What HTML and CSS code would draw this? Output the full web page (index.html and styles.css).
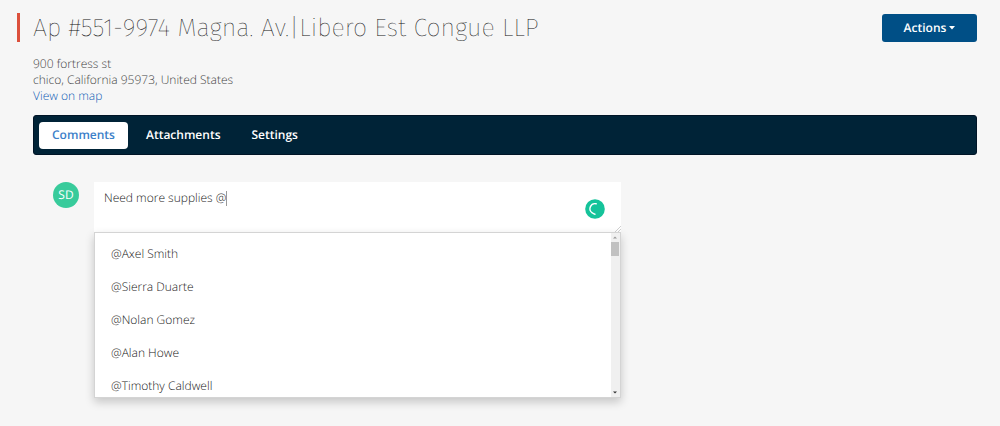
FILE: index.html
```html
<!DOCTYPE html>
<html lang="en">
<head>
<meta charset="utf-8">
<meta name="viewport" content="width=device-width, initial-scale=1">
<title>Libero Est Congue LLP</title>
<link rel="stylesheet" href="styles.css">
</head>
<body>
<header class="header">
  <h1 class="title">Ap #551-9974 Magna. Av.|Libero Est Congue LLP</h1>
  <button class="actions" type="button">Actions
    <svg class="caret" viewBox="0 0 6 4" aria-hidden="true"><path d="M0 0h6L3 3.5z"/></svg>
  </button>
</header>
<main class="content">
  <address class="address">
    <span>900 fortress st</span>
    <span>chico, California 95973, United States</span>
    <a class="map-link" href="#map">View on map</a>
  </address>
  <nav class="tabs">
    <a class="tab tab-active" href="#comments">Comments</a>
    <a class="tab" href="#attachments">Attachments</a>
    <a class="tab" href="#settings">Settings</a>
  </nav>
  <section class="composer">
    <span class="avatar">SD</span>
    <div class="editor">
      <textarea class="comment" aria-label="Comment">Need more supplies @</textarea>
      <span class="text-cursor"></span>
      <svg class="spinner" viewBox="0 0 20 20" aria-hidden="true">
        <circle cx="10" cy="10" r="9.8" fill="#15c39a"/>
        <path d="M11.2 4.8A5 5 0 0 0 7.2 13.8Q8.4 15 10 15.2" fill="none" stroke="#fff" stroke-width="1.4" stroke-linecap="round"/>
      </svg>
      <svg class="grip" viewBox="0 0 6 6" aria-hidden="true"><path d="M0 6L6 0M3 6L6 3" stroke="#bbb" stroke-width=".7"/></svg>
      <div class="mentions">
        <ul class="people" role="listbox" aria-label="People">
          <li class="person" role="option">@Axel Smith</li>
          <li class="person" role="option">@Sierra Duarte</li>
          <li class="person" role="option">@Nolan Gomez</li>
          <li class="person" role="option">@Alan Howe</li>
          <li class="person" role="option">@Timothy Caldwell</li>
        </ul>
        <div class="scrollbar" aria-hidden="true">
          <svg class="arrow" viewBox="0 0 8 8"><path d="M2 5h4L4 3z" fill="#999"/></svg>
          <span class="thumb"></span>
          <svg class="arrow arrow-down" viewBox="0 0 8 8"><path d="M2 3h4L4 5z" fill="#333"/></svg>
        </div>
      </div>
    </div>
  </section>
</main>
</body>
</html>
```
FILE: styles.css
```css
* { box-sizing: border-box; }
body {
  display: flow-root;
  min-height: 100vh;
  margin: 0;
  background: #f6f6f6;
  color: #222;
  font: 300 12px/16px "Open Sans", "Liberation Sans", sans-serif;
  text-rendering: geometricPrecision;
}
.header {
  display: flex;
  justify-content: space-between;
  align-items: center;
  margin: 13px 23px 0 17px;
}
.title {
  margin: 0;
  padding: 1px 0 0 13px;
  border-left: 3px solid #dc503c;
  color: #111;
  font: 200 25px/28px "Fira Sans", Roboto, sans-serif;
}
.actions {
  display: flex;
  align-items: center;
  justify-content: center;
  gap: 3px;
  width: 95px;
  height: 28px;
  padding: 0;
  border: 0;
  border-radius: 3px;
  background: #004f86;
  color: #fff;
  font: 600 12px/16px "Open Sans", sans-serif;
  text-rendering: inherit;
}
.caret { width: 6px; height: 4px; fill: #fff; }
.content { margin: 14px 23px 0 33px; }
.address {
  display: flex;
  flex-direction: column;
  align-items: flex-start;
  color: #444;
  font-style: normal;
}
.map-link { color: #0f5cb5; text-decoration: none; }
.tabs {
  display: flex;
  gap: 5px;
  margin-top: 11px;
  padding: 6px 5px 5px;
  border: 1px solid #001426;
  border-radius: 3px;
  background: #002337;
}
.tab {
  padding: 5px 13px 6px;
  border-radius: 4px;
  color: #fff;
  font-weight: 600;
  text-decoration: none;
}
.tab-active { background: #fff; color: #3c80c9; }
.composer {
  display: flex;
  align-items: flex-start;
  gap: 15px;
  margin: 27px 0 0 20px;
}
.avatar {
  width: 26px;
  height: 26px;
  border-radius: 50%;
  background: #38cb9b;
  color: #fff;
  font-weight: 400;
  line-height: 26px;
  text-align: center;
}
.editor { position: relative; width: 57%; }
.comment {
  display: block;
  width: 100%;
  height: 50px;
  padding: 8px 10px;
  border: 0;
  outline: 0;
  resize: none;
  background: #fff;
  color: #222;
  font: inherit;
  text-rendering: inherit;
}
.text-cursor {
  position: absolute;
  top: 9px;
  left: 132px;
  width: 1px;
  height: 15px;
  background: #999;
}
.spinner { position: absolute; top: 17px; right: 16px; width: 20px; height: 20px; }
.grip { position: absolute; top: 44px; right: 0; width: 6px; height: 6px; }
.mentions {
  position: absolute;
  top: 50px;
  left: 0;
  display: flex;
  width: 100%;
  height: 166px;
  border: 1px solid #d4d4d4;
  background: #fff;
  box-shadow: 0 4px 9px rgba(0, 0, 0, .2);
}
.people {
  flex: 1;
  margin: 0;
  padding: 4px 0 0;
  overflow: hidden;
  list-style: none;
}
.person { padding: 0 16px; line-height: 33px; }
.scrollbar {
  display: flex;
  flex-direction: column;
  align-items: center;
  width: 9px;
  background: #f0f0f0;
}
.arrow { width: 8px; height: 9px; }
.thumb { width: 8px; height: 14px; background: #c1c1c1; }
.arrow-down { margin-top: auto; }
```
